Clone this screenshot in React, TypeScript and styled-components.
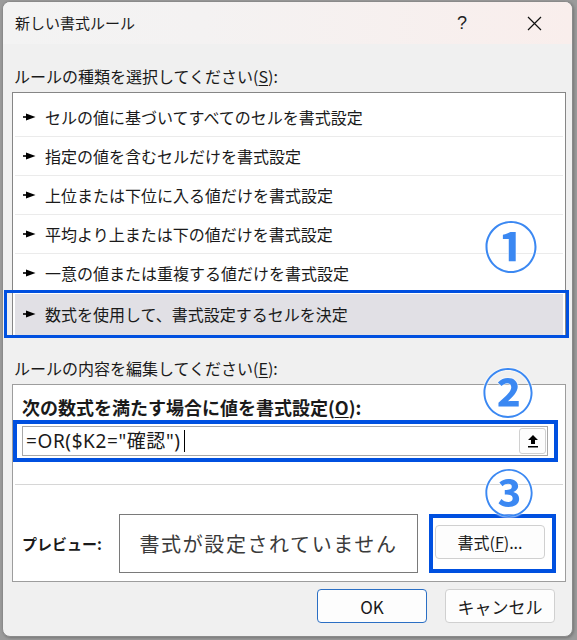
import React from 'react';
import styled, { createGlobalStyle } from 'styled-components';

const GlobalStyle = createGlobalStyle`
  html, body {
    margin: 0;
    padding: 0;
    background: #9b9b9b;
  }
  body {
    font-family: 'Noto Sans CJK JP', 'Noto Sans', sans-serif;
    color: #1a1a1a;
  }
`;

const Page = styled.div`
  width: 577px;
  height: 640px;
  padding: 1px 0 0 2px;
  box-sizing: border-box;
`;

const Window = styled.div`
  position: relative;
  width: 571px;
  height: 636px;
  box-sizing: border-box;
  border: 1px solid #8a8a8a;
  border-radius: 8px;
  background: #f0f0f0;
  overflow: hidden;
  display: flex;
  flex-direction: column;
  box-shadow: 1px 1px 3px rgba(0, 0, 0, 0.25);
`;

const TitleBar = styled.div`
  height: 42px;
  flex-shrink: 0;
  display: flex;
  align-items: center;
  padding-left: 12px;
  padding-right: 2px;
  background: linear-gradient(90deg, #f3f3f3 0%, #f4f2f2 35%, #f9eeec 100%);
`;

const Title = styled.div`
  flex: 1;
  font-size: 15px;
  line-height: 1;
  padding-bottom: 2px;
`;

const TitleButton = styled.div`
  width: 72px;
  height: 42px;
  display: flex;
  align-items: center;
  justify-content: center;
  font-size: 18px;
  font-family: 'Liberation Sans', sans-serif;
  color: #222;
`;

const Body = styled.div`
  flex: 1;
  display: flex;
  flex-direction: column;
  padding: 0 6px 0 9px;
`;

const SectionLabel = styled.div<{ $top: number }>`
  margin-top: ${(p) => p.$top}px;
  height: 22px;
  display: flex;
  align-items: center;
  font-size: 16px;
  line-height: 1;
  padding-left: 2px;
`;

const Mnemonic = styled.span`
  text-decoration: underline;
  text-underline-offset: 2px;
  text-decoration-thickness: 1px;
`;

const ListBox = styled.div`
  margin-top: 5px;
  height: 244px;
  box-sizing: border-box;
  border: 1px solid #868686;
  background: #ffffff;
  padding: 5px 2px 0 2px;
  display: flex;
  flex-direction: column;
`;

const Row = styled.div<{ $selected?: boolean }>`
  position: relative;
  height: ${(p) => (p.$selected ? 41 : 39)}px;
  flex-shrink: 0;
  display: flex;
  align-items: center;
  gap: 9px;
  padding-left: 8px;
  font-size: 16px;
  line-height: 1;
  background: ${(p) => (p.$selected ? '#e1e0e5' : 'transparent')};
  border-bottom: 1px solid ${(p) => (p.$selected ? 'transparent' : '#ebebeb')};
  box-sizing: border-box;
  margin-top: ${(p) => (p.$selected ? 1 : 0)}px;
`;

const RowMark = styled.div`
  position: absolute;
  left: -11px;
  right: -6px;
  top: -4px;
  bottom: -4px;
  border: 3px solid #0050e0;
  pointer-events: none;
`;

const Circled = styled.div<{ $size: number; $left: number; $top: number }>`
  position: absolute;
  left: ${(p) => p.$left}px;
  top: ${(p) => p.$top}px;
  font-size: ${(p) => p.$size}px;
  font-weight: 700;
  line-height: 1;
  color: #3b88f2;
  text-shadow: 0 0 2px #ffffff, 0 0 2px #ffffff;
  font-family: 'Noto Sans CJK JP', sans-serif;
`;

const EditPanel = styled.div`
  margin-top: 5px;
  height: 198px;
  box-sizing: border-box;
  border: 1px solid #9d9d9d;
  background: #ffffff;
  display: flex;
  flex-direction: column;
`;

const BoldLabel = styled.div`
  margin: 11px 0 0 9px;
  height: 22px;
  display: flex;
  align-items: center;
  font-size: 18px;
  font-weight: 700;
  line-height: 1;
`;

const Highlight = styled.div<{ $pad: string }>`
  border: 4px solid #0050e0;
  padding: ${(p) => p.$pad};
  box-sizing: border-box;
  display: flex;
`;

const FormulaFrame = styled(Highlight)`
  margin: 2px 7px 0 0;
  height: 42px;
`;

const FormulaInput = styled.div`
  flex: 1;
  border: 1px solid #a8a8a8;
  display: flex;
  align-items: center;
  justify-content: space-between;
  padding: 0 1px 0 3px;
`;

const FormulaText = styled.div`
  font-family: 'Noto Sans', 'Noto Sans CJK JP', sans-serif;
  font-size: 19px;
  letter-spacing: 0.6px;
  line-height: 1;
  display: flex;
  align-items: center;
`;

const Caret = styled.span`
  display: inline-block;
  width: 1px;
  height: 22px;
  background: #000;
  margin-left: 3px;
`;

const CollapseButton = styled.div`
  width: 27px;
  height: 26px;
  box-sizing: border-box;
  border: 1px solid #d0d0d0;
  border-radius: 3px;
  background: #fdfdfd;
  display: flex;
  align-items: center;
  justify-content: center;
`;

const Divider = styled.div`
  height: 1px;
  background: #d6d6d6;
  margin: 22px 2px 0 2px;
`;

const PreviewRow = styled.div`
  margin-top: 29px;
  display: flex;
  align-items: center;
  padding-left: 9px;
`;

const PreviewLabel = styled.div`
  width: 97px;
  font-size: 15px;
  font-weight: 700;
  line-height: 1;
`;

const PreviewBox = styled.div`
  width: 299px;
  height: 59px;
  box-sizing: border-box;
  border: 1px solid #7a7a7a;
  display: flex;
  align-items: center;
  justify-content: center;
  font-size: 20px;
  letter-spacing: 1.6px;
  color: #3a3a3a;
  line-height: 1;
`;

const FormatFrame = styled(Highlight)`
  margin-left: 11px;
  width: 127px;
  height: 59px;
`;

const Button = styled.div<{ $primary?: boolean }>`
  box-sizing: border-box;
  border: 1px solid ${(p) => (p.$primary ? '#2b6fc4' : '#d0d0d0')};
  border-radius: 4px;
  background: #fdfdfd;
  display: flex;
  align-items: center;
  justify-content: center;
  font-size: 16px;
  line-height: 1;
  color: #1a1a1a;
`;

const FormatButton = styled(Button)`
  width: 110px;
  height: 34px;
`;

const Footer = styled.div`
  margin-top: 7px;
  display: flex;
  justify-content: flex-end;
  gap: 18px;
  padding-right: 11px;
`;

const FooterButton = styled(Button)`
  width: 110px;
  height: 34px;
  font-size: 17px;
`;

const rules = [
  'セルの値に基づいてすべてのセルを書式設定',
  '指定の値を含むセルだけを書式設定',
  '上位または下位に入る値だけを書式設定',
  '平均より上または下の値だけを書式設定',
  '一意の値または重複する値だけを書式設定',
  '数式を使用して、書式設定するセルを決定',
];

const Pointer = () => (
  <svg width="13" height="8" viewBox="0 0 13 8">
    <rect x="0" y="3.2" width="4" height="1.6" fill="#000" />
    <path d="M3 0.5 L12.5 4 L3 7.5 Z" fill="#000" />
  </svg>
);

const CloseIcon = () => (
  <svg width="15" height="15" viewBox="0 0 15 15">
    <path d="M1 1 L14 14 M14 1 L1 14" stroke="#111" strokeWidth="1.2" />
  </svg>
);

const UpArrow = () => (
  <svg width="12" height="14" viewBox="0 0 12 14">
    <path d="M6 1 L11 6 L8 6 L8 10 L4 10 L4 6 L1 6 Z" fill="#000" />
    <rect x="1" y="12" width="10" height="1.5" fill="#000" />
  </svg>
);

const App = () => {
  const selected = rules.length - 1;

  return (
    <Page>
      <GlobalStyle />
      <Window>
        <TitleBar>
          <Title>新しい書式ルール</Title>
          <TitleButton>?</TitleButton>
          <TitleButton>
            <CloseIcon />
          </TitleButton>
        </TitleBar>

        <Body>
          <SectionLabel $top={21}>
            ルールの種類を選択してください(<Mnemonic>S</Mnemonic>):
          </SectionLabel>
          <ListBox>
            {rules.map((rule, i) => (
              <Row key={rule} $selected={i === selected}>
                <Pointer />
                {rule}
                {i === selected && <RowMark />}
              </Row>
            ))}
          </ListBox>

          <SectionLabel $top={21}>
            ルールの内容を編集してください(<Mnemonic>E</Mnemonic>):
          </SectionLabel>
          <EditPanel>
            <BoldLabel>
              次の数式を満たす場合に値を書式設定(<Mnemonic>O</Mnemonic>):
            </BoldLabel>
            <FormulaFrame $pad="2px 6px 2px 5px">
              <FormulaInput>
                <FormulaText>
                  =OR($K2="確認")
                  <Caret />
                </FormulaText>
                <CollapseButton>
                  <UpArrow />
                </CollapseButton>
              </FormulaInput>
            </FormulaFrame>
            <Divider />
            <PreviewRow>
              <PreviewLabel>プレビュー:</PreviewLabel>
              <PreviewBox>書式が設定されていません</PreviewBox>
              <FormatFrame $pad="7px 7px 9px 2px">
                <FormatButton>
                  書式(<Mnemonic>F</Mnemonic>)...
                </FormatButton>
              </FormatFrame>
            </PreviewRow>
          </EditPanel>

          <Footer>
            <FooterButton $primary>OK</FooterButton>
            <FooterButton>キャンセル</FooterButton>
          </Footer>
        </Body>

        <Circled $size={54} $left={481} $top={216}>①</Circled>
        <Circled $size={52} $left={479} $top={363}>②</Circled>
        <Circled $size={50} $left={481} $top={463}>③</Circled>
      </Window>
    </Page>
  );
};

export default App;
